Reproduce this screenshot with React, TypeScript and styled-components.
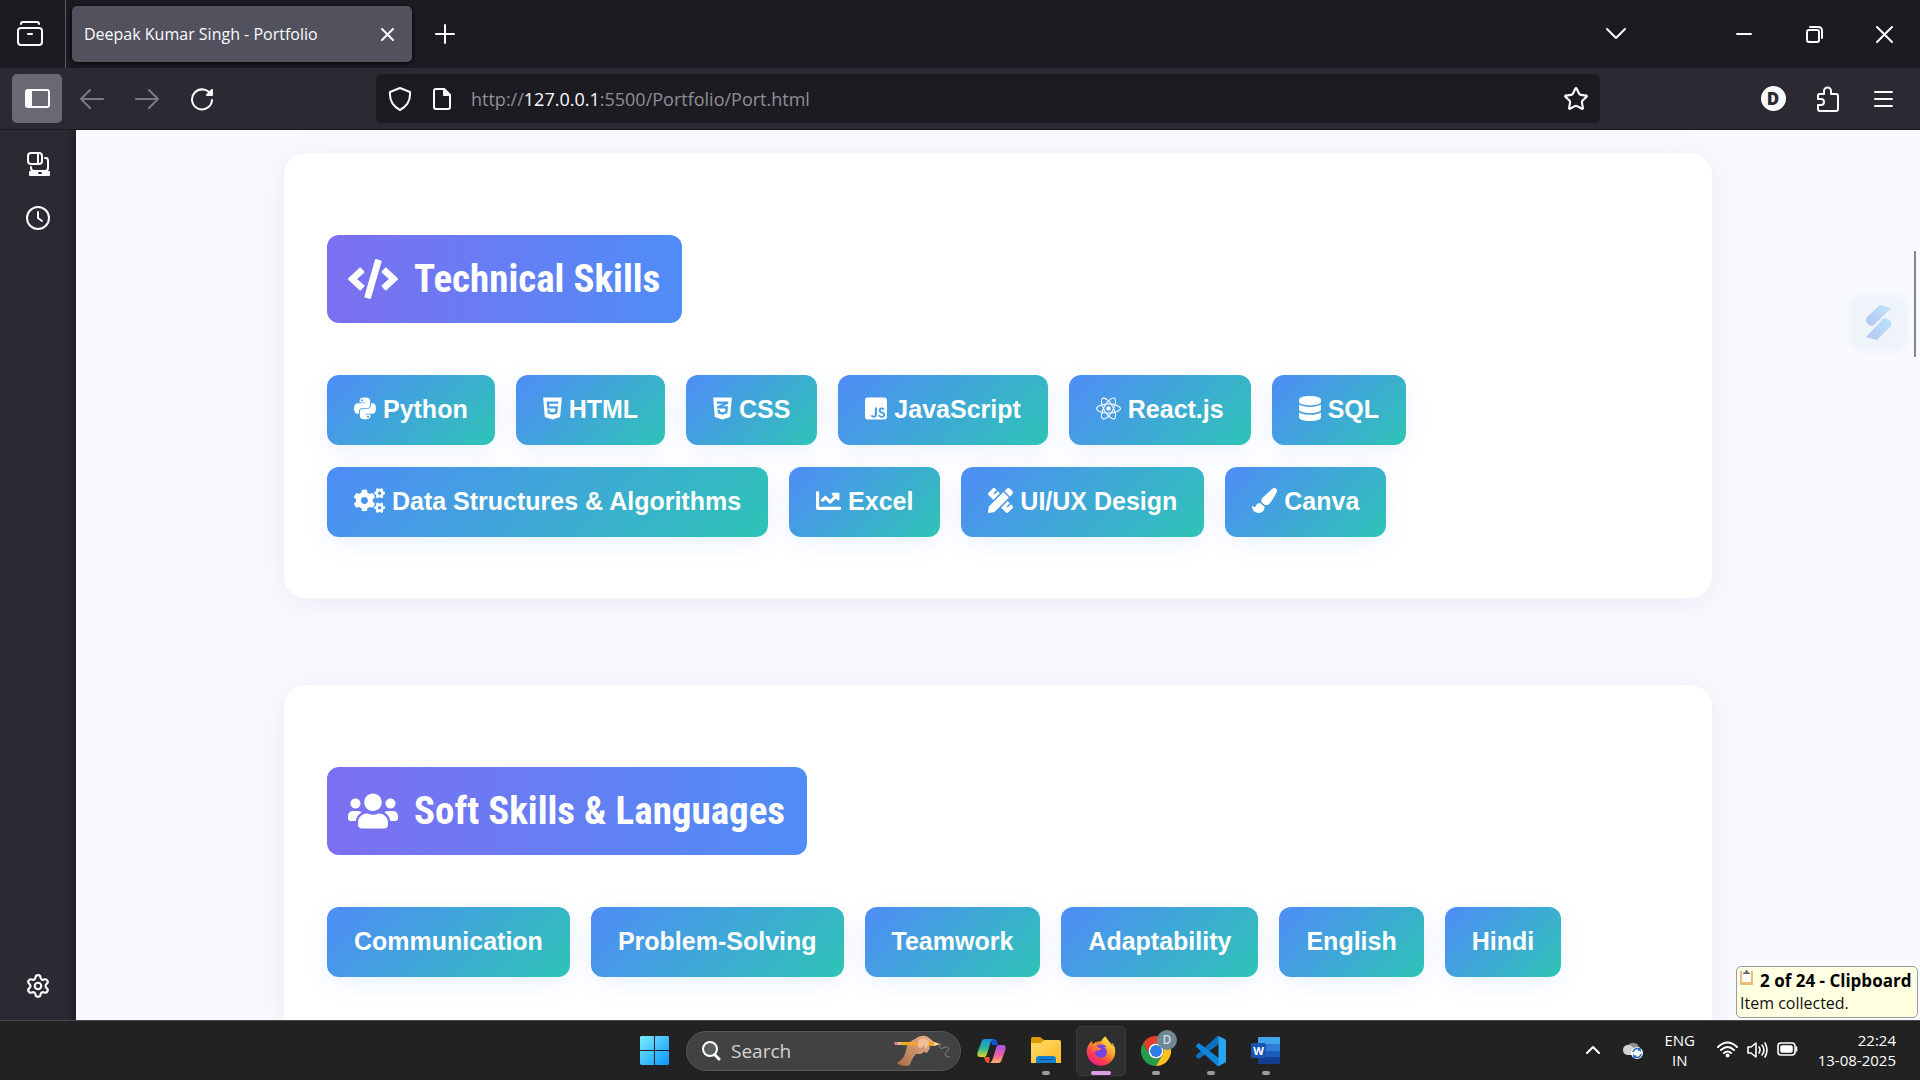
import React from "react";
import styled, { createGlobalStyle } from "styled-components";
import {
  FaChartLine,
  FaCode,
  FaCogs,
  FaCss3Alt,
  FaDatabase,
  FaHtml5,
  FaJsSquare,
  FaPaintBrush,
  FaPencilRuler,
  FaPython,
  FaReact,
  FaUsers,
} from "react-icons/fa";
import { FaFirefoxBrowser } from "react-icons/fa6";
import { Settings, Star } from "lucide-react";

const UI_FONT = '"Open Sans", "Noto Sans", sans-serif';

const GlobalStyle = createGlobalStyle`
  *, *::before, *::after { box-sizing: border-box; }
  body { margin: 0; background: #1c1b22; font-family: ${UI_FONT}; }
  button { font: inherit; color: inherit; background: none; border: 0; padding: 0; cursor: pointer; }
  svg { display: block; flex: none; }
`;

const Shell = styled.div`
  display: flex;
  flex-direction: column;
  height: 100vh;
  overflow: hidden;
`;

/* ---------- tab strip ---------- */

const TabStrip = styled.header`
  display: flex;
  align-items: stretch;
  height: 68px;
  flex: none;
  background: #1c1b22;
  color: #fbfbfe;
`;

const RecentButton = styled.button`
  display: grid;
  place-items: center;
  width: 66px;
  padding-right: 5px;
  border-right: 1px solid #5b5a63;
`;

const Tab = styled.div`
  display: flex;
  align-items: center;
  justify-content: space-between;
  width: 340px;
  margin: 6px;
  padding: 0 12px;
  border-radius: 5px;
  background: #52525e;
  box-shadow: 0 1px 5px #000000;
  font-size: 16px;
  white-space: nowrap;
`;

const TabClose = styled.button`
  display: grid;
  place-items: center;
  width: 26px;
  height: 30px;
`;

const NewTab = styled.button`
  display: grid;
  place-items: center;
  width: 54px;
`;

const WindowControls = styled.div`
  display: flex;
  margin-left: auto;
  padding-right: 1px;
`;

const WindowButton = styled.button<{ $gap?: number }>`
  display: grid;
  place-items: center;
  width: 70px;
  margin-right: ${(p) => p.$gap ?? 0}px;
`;

/* ---------- navigation toolbar ---------- */

const Toolbar = styled.nav`
  display: grid;
  grid-template-columns: 376px minmax(0, 1fr) 320px;
  align-items: center;
  height: 62px;
  flex: none;
  background: #2b2a33;
  border-bottom: 1px solid #1a191f;
  color: #fbfbfe;
`;

const ToolGroup = styled.div<{ $end?: boolean }>`
  display: flex;
  align-items: center;
  gap: 5px;
  padding: 0 12px;
  justify-content: ${(p) => (p.$end ? "flex-end" : "flex-start")};
`;

const ToolButton = styled.button<{ $active?: boolean; $dim?: boolean }>`
  display: grid;
  place-items: center;
  width: 50px;
  height: 49px;
  border-radius: 5px;
  background: ${(p) => (p.$active ? "#6a6973" : "transparent")};
  color: ${(p) => (p.$dim ? "#7b7a83" : "#fbfbfe")};
`;

const AddressBar = styled.div`
  display: flex;
  align-items: center;
  height: 49px;
  padding: 0 11px;
  border-radius: 5px;
  background: #1c1b22;
`;

const AddressIcon = styled.button`
  display: grid;
  place-items: center;
  width: 26px;
  margin-right: 16px;
  &:last-child { margin: 0 0 0 auto; }
`;

const Address = styled.a`
  color: #8f8e96;
  font-size: 18px;
  text-decoration: none;
  white-space: nowrap;
  b { font-weight: 400; color: #fbfbfe; }
`;

const Account = styled.span`
  display: grid;
  place-items: center;
  width: 25px;
  height: 25px;
  border-radius: 50%;
  background: #fbfbfe;
  color: #2b2a33;
  font-size: 17px;
  font-weight: 800;
`;

/* ---------- body ---------- */

const Body = styled.div`
  display: flex;
  flex: 1;
  min-height: 0;
`;

const SideBar = styled.aside`
  display: flex;
  flex-direction: column;
  align-items: center;
  gap: 4px;
  width: 76px;
  padding: 9px 0;
  flex: none;
  background: linear-gradient(90deg, #2b2a33 88%, #222129 100%);
  color: #fbfbfe;
`;

const SideButton = styled.button<{ $bottom?: boolean }>`
  display: grid;
  place-items: center;
  width: 50px;
  height: 50px;
  margin-top: ${(p) => (p.$bottom ? "auto" : 0)};
`;

const Viewport = styled.div`
  position: relative;
  flex: 1;
  min-width: 0;
  overflow: hidden;
  background: #f9faff;
`;

const Page = styled.main`
  display: flex;
  flex-direction: column;
  align-items: center;
  gap: 87px;
  padding: 23px 40px;
`;

const Card = styled.section`
  width: 100%;
  max-width: 1428px;
  padding: 82px 43px 61px;
  border-radius: 22px;
  background: #ffffff;
  box-shadow: 0 5px 32px rgba(60, 60, 110, 0.08);
`;

const SectionTitle = styled.h2`
  display: inline-flex;
  align-items: center;
  gap: 16px;
  height: 88px;
  margin: 0 0 52px;
  padding: 0 22px 0 21px;
  border-radius: 12px;
  background: linear-gradient(90deg, #7c6ff0, #4f8df7);
  color: #ffffff;
  font: 700 39px "Roboto Condensed", "Liberation Sans Narrow", Roboto, sans-serif;
  white-space: nowrap;
  svg { width: 50px; height: 40px; }
`;

const Skills = styled.ul`
  display: flex;
  flex-wrap: wrap;
  gap: 22px 21px;
  margin: 0;
  padding: 0;
  list-style: none;
`;

const Skill = styled.li<{ $icon?: number }>`
  padding: 0 27px 2px;
  border-radius: 12px;
  background: linear-gradient(135deg, #4f8cf7, #2ec4b6);
  box-shadow: 0 6px 22px rgba(79, 140, 247, 0.12);
  color: #ffffff;
  font: 700 25px/68px "Liberation Sans", Arial, sans-serif;
  white-space: nowrap;
  svg {
    display: inline-block;
    width: ${(p) => p.$icon ?? 25}px;
    height: 25px;
    vertical-align: -3px;
  }
`;

const ScrollThumb = styled.div`
  position: absolute;
  top: 121px;
  right: 4px;
  width: 2px;
  height: 106px;
  background: #87878b;
`;

const Assistant = styled.button`
  position: absolute;
  top: 162px;
  right: 10px;
  display: grid;
  place-items: center;
  width: 62px;
  height: 62px;
  border: 4px solid #f4f7fc;
  border-radius: 16px;
  background: #eff4fb;
`;

const Toast = styled.div`
  position: absolute;
  right: 2px;
  bottom: 2px;
  width: 182px;
  height: 52px;
  padding: 2px 3px;
  border: 1px solid #9c9ca2;
  border-radius: 5px;
  background: #ffffe1;
  color: #111111;
  font-size: 16px;
  line-height: 23px;
  white-space: nowrap;
`;

const ToastTitle = styled.strong`
  display: flex;
  gap: 7px;
  color: #000000;
  font-size: 17px;
`;

/* ---------- taskbar ---------- */

const Taskbar = styled.footer`
  display: grid;
  grid-template-columns: 1fr auto 1fr;
  height: 60px;
  flex: none;
  border-top: 1px solid #48494b;
  background: #222222;
  color: #ffffff;
`;

const Apps = styled.div`
  grid-column: 2;
  display: flex;
  align-items: center;
  gap: 5px;
`;

const AppButton = styled.button<{ $active?: boolean }>`
  position: relative;
  display: grid;
  place-items: center;
  width: 50px;
  height: 50px;
  border: 1px solid ${(p) => (p.$active ? "#3b3b3b" : "transparent")};
  border-radius: 5px;
  background: ${(p) => (p.$active ? "#2f2f2f" : "transparent")};
`;

const Running = styled.span<{ $active?: boolean }>`
  position: absolute;
  bottom: 0;
  left: 50%;
  width: ${(p) => (p.$active ? 20 : 8)}px;
  height: 4px;
  border-radius: 2px;
  background: ${(p) => (p.$active ? "#dc9fe3" : "#9b9b9b")};
  transform: translateX(-50%);
`;

const Profile = styled.span`
  position: absolute;
  top: 3px;
  right: 3px;
  width: 20px;
  height: 20px;
  border-radius: 50%;
  background: #6f8896;
  color: #d3dde2;
  font-size: 12px;
  font-weight: 600;
  line-height: 20px;
  text-align: center;
`;

const SearchBox = styled.label`
  display: flex;
  align-items: center;
  gap: 10px;
  width: 275px;
  height: 40px;
  margin-left: 2px;
  padding: 0 9px 0 14px;
  border: 1px solid #565656;
  border-radius: 20px;
  background: #424242;
`;

const SearchInput = styled.input`
  flex: 1;
  min-width: 0;
  padding: 0;
  border: 0;
  outline: 0;
  background: none;
  color: #d4d4d4;
  font: 19px ${UI_FONT};
  &::placeholder { color: #d4d4d4; opacity: 1; }
`;

const Tray = styled.div`
  display: flex;
  align-items: center;
  justify-content: flex-end;
  padding: 0 24px 2px 0;
  font-size: 15px;
  line-height: 20px;
`;

const TrayButton = styled.button<{ $w: number }>`
  display: grid;
  place-items: center;
  width: ${(p) => p.$w}px;
  height: 50px;
`;

const Status = styled.button`
  display: flex;
  align-items: center;
  gap: 9px;
  margin: 0 20px 0 10px;
`;

const Clock = styled.time`
  text-align: right;
  white-space: nowrap;
`;

/* ---------- drawings ---------- */

const Line = ({
  w = 24,
  h = 24,
  sw = 2,
  children,
}: {
  w?: number;
  h?: number;
  sw?: number;
  children: React.ReactNode;
}) => (
  <svg
    width={w}
    height={h}
    viewBox={`0 0 ${w} ${h}`}
    fill="none"
    stroke="currentColor"
    strokeWidth={sw}
    strokeLinecap="round"
    strokeLinejoin="round"
    aria-hidden="true"
  >
    {children}
  </svg>
);

const StartLogo = () => (
  <svg width="29" height="29" viewBox="0 0 29 29" aria-hidden="true">
    <defs>
      <linearGradient id="win" gradientUnits="userSpaceOnUse" x1="0" y1="0" x2="29" y2="29">
        <stop offset="0" stopColor="#7cecff" />
        <stop offset="1" stopColor="#0a95fb" />
      </linearGradient>
    </defs>
    <path fill="url(#win)" d="M1 0h13v14H0V1zM15 0h13l1 1v13H15zM0 15h14v14H1l-1-1zM15 15h14v13l-1 1H15z" />
  </svg>
);

const WritingHand = () => (
  <svg width="58" height="32" viewBox="0 0 58 32" aria-hidden="true">
    <defs>
      <linearGradient id="skin" x1="0" y1="1" x2="1" y2="0">
        <stop offset="0" stopColor="#a86c48" />
        <stop offset="1" stopColor="#eeb48c" />
      </linearGradient>
    </defs>
    <path
      fill="url(#skin)"
      d="M4 28C9 25 12 21 13 15c1-6 4-9 9-11 5-4 11-4 14-1l5 4-1 2-4 1 1 3-3 5-3-1-3 2-5 0c-3 3-5 7-6 11-4 2-9 1-13-2z"
    />
    <path fill="#f4a62a" d="M5 7l36 0 6 2-6 2L5 10z" />
    <path fill="#e67d8b" d="M1 7h4v3H2z" />
    <path fill="#c8c8c8" d="M5 7h2v3H5z" />
    <path fill="#f6d3a0" d="M41 7l6 2-6 2z" />
    <path fill="#f0bd99" d="M25 6c3-3 7-3 10 0l1 3-3 5-2-4-3 3-3-1z" />
    <path
      fill="none"
      stroke="#8b8b8b"
      strokeLinecap="round"
      d="M48 9c-3 4-1 5 2 4 4-2 7-1 5 2-3 4-5 6 1 7"
    />
  </svg>
);

const CopilotLogo = () => (
  <svg width="29" height="26" viewBox="0 0 29 26" aria-hidden="true">
    <defs>
      <linearGradient id="cp1" x1="0" y1="0" x2="0" y2="1">
        <stop offset="0" stopColor="#1b8fe8" />
        <stop offset="0.55" stopColor="#2fb98e" />
        <stop offset="1" stopColor="#e5d920" />
      </linearGradient>
      <linearGradient id="cp2" x1="0" y1="0" x2="0" y2="1">
        <stop offset="0" stopColor="#a055ee" />
        <stop offset="0.55" stopColor="#ee5d9b" />
        <stop offset="1" stopColor="#ffb36a" />
      </linearGradient>
    </defs>
    <path fill="#1a51cf" d="M14 1h3c3 0 3 3 4 6h-6z" />
    <path fill="#ee5130" d="M7 19h6l-1 6c-3 0-4-2-5-6z" />
    <path fill="url(#cp1)" d="M8 1h9c-2 0-3 2-4 5l-3 10c-1 3-2 3-4 3H3c-3 0-3-3-2-6L4 5c1-3 2-4 4-4z" />
    <path fill="url(#cp2)" d="M21 25h-9c2 0 3-2 4-5l3-10c1-3 2-3 4-3h3c3 0 3 3 2 6l-3 8c-1 3-2 4-4 4z" />
  </svg>
);

const FolderLogo = () => (
  <svg width="30" height="27" viewBox="0 0 30 27" aria-hidden="true">
    <defs>
      <linearGradient id="folder" x1="0" y1="0" x2="1" y2="1">
        <stop offset="0" stopColor="#ffdb68" />
        <stop offset="1" stopColor="#fcbb2a" />
      </linearGradient>
    </defs>
    <path fill="#dc9a05" d="M0 2q0-2 2-2h7l4 3v5H0z" />
    <path fill="url(#folder)" d="M0 6h10l3-3h15q2 0 2 2v21H0z" />
    <path fill="#1181cf" d="M5 26v-4q0-3 3-3h14q3 0 3 3v4z" />
    <path fill="#0b5797" d="M8 22h14v1H8z" />
  </svg>
);

const FirefoxLogo = () => (
  <svg width="30" height="30" viewBox="0 0 30 30" aria-hidden="true">
    <defs>
      <linearGradient id="fox" x1="0.85" y1="0.05" x2="0.2" y2="1">
        <stop offset="0" stopColor="#fff14f" />
        <stop offset="0.4" stopColor="#ff9c28" />
        <stop offset="0.7" stopColor="#ff3f4c" />
        <stop offset="1" stopColor="#e8168a" />
      </linearGradient>
    </defs>
    <circle cx="15" cy="16" r="11" fill="#ff7a2d" />
    <circle cx="15" cy="15" r="7" fill="#7a42df" />
    <FaFirefoxBrowser size={30} fill="url(#fox)" />
  </svg>
);

const ChromeLogo = () => (
  <svg width="30" height="30" viewBox="0 0 48 48" aria-hidden="true">
    <path fill="#e43e2f" d="M24 12H44.8A24 24 0 0 0 3.2 12L13.6 30A12 12 0 0 1 24 12z" />
    <path fill="#259e49" d="M13.6 30L3.2 12A24 24 0 0 0 24 48L34.4 30A12 12 0 0 1 13.6 30z" />
    <path fill="#fcc31e" d="M34.4 30L24 48A24 24 0 0 0 44.8 12H24A12 12 0 0 1 34.4 30z" />
    <circle cx="24" cy="24" r="12" fill="#ffffff" />
    <circle cx="24" cy="24" r="9.5" fill="#2f7bea" />
  </svg>
);

const CodeLogo = () => (
  <svg width="30" height="30" viewBox="0 0 100 100" aria-hidden="true">
    <path
      fill="#0e72ba"
      d="M96.5 10.8L75.9.9c-2.4-1.2-5.2-.7-7.1 1.2L1.3 63.6c-1.8 1.6-1.8 4.5 0 6.1l5.5 5c1.5 1.4 3.7 1.5 5.3.3L93.4 13.4c2.7-2.1 6.6-.2 6.6 3.3v-.3c0-2.4-1.4-4.6-3.5-5.6z"
    />
    <path
      fill="#0b86d8"
      d="M96.5 89.2l-20.6 9.9c-2.4 1.2-5.2.7-7.1-1.2L1.3 36.4c-1.8-1.6-1.8-4.5 0-6.1l5.5-5c1.5-1.4 3.7-1.5 5.3-.3l81.3 61.6c2.7 2.1 6.6.2 6.6-3.3v.3c0 2.4-1.4 4.6-3.5 5.6z"
    />
    <path
      fill="#27a7f0"
      d="M75.9 99.1c-2.4 1.2-5.2.7-7.1-1.2 2.3 2.3 6.2.7 6.2-2.6V4.7c0-3.3-3.9-4.9-6.2-2.6C70.6.2 73.5-.3 75.9.9l20.6 9.9c2.1 1 3.5 3.2 3.5 5.6v67.2c0 2.4-1.4 4.6-3.5 5.6z"
    />
  </svg>
);

const WordLetter = styled.span`
  position: absolute;
  top: 16px;
  left: 9px;
  width: 15px;
  height: 15px;
  border-radius: 2px;
  background: #1b53b3;
  font-size: 11px;
  font-weight: 700;
  line-height: 15px;
  text-align: center;
`;

const WordLogo = () => (
  <>
    <svg width="30" height="27" viewBox="0 0 30 27" aria-hidden="true">
      <path fill="#42a4ec" d="M7 1q0-1 1-1h20q1 0 1 1v6H7z" />
      <path fill="#2c7ed5" d="M7 7h22v7H7z" />
      <path fill="#1d5cbd" d="M7 14h22v6H7z" />
      <path fill="#123f91" d="M7 20h22v6q0 1-1 1H8q-1 0-1-1z" />
    </svg>
    <WordLetter>W</WordLetter>
  </>
);

const ClipboardIcon = () => (
  <svg width="13" height="17" viewBox="0 0 13 17" aria-hidden="true">
    <path fill="#ecbd78" d="M0 2h13v14H0z" />
    <path fill="#ffffff" d="M2 2h9v11H2z" />
    <path fill="#696969" d="M3 4l2-1 1-2h1l1 2 2 1v1H3z" />
  </svg>
);

/* ---------- content ---------- */

const technical = [
  { name: "Python", icon: <FaPython />, width: 22 },
  { name: "HTML", icon: <FaHtml5 />, width: 19 },
  { name: "CSS", icon: <FaCss3Alt />, width: 19 },
  { name: "JavaScript", icon: <FaJsSquare />, width: 22 },
  { name: "React.js", icon: <FaReact />, width: 25 },
  { name: "SQL", icon: <FaDatabase />, width: 22 },
  { name: "Data Structures & Algorithms", icon: <FaCogs />, width: 31 },
  { name: "Excel", icon: <FaChartLine />, width: 25 },
  { name: "UI/UX Design", icon: <FaPencilRuler />, width: 25 },
  { name: "Canva", icon: <FaPaintBrush />, width: 25 },
];

const soft = ["Communication", "Problem-Solving", "Teamwork", "Adaptability", "English", "Hindi"];

const openApps = [
  { name: "File Explorer", logo: <FolderLogo /> },
  { name: "Firefox", logo: <FirefoxLogo />, active: true },
  { name: "Chrome", logo: <ChromeLogo />, profile: "D" },
  { name: "Visual Studio Code", logo: <CodeLogo /> },
  { name: "Word", logo: <WordLogo /> },
];

export default function App() {
  return (
    <Shell>
      <GlobalStyle />
      <TabStrip>
        <RecentButton aria-label="Recent browsing">
          <Line w={26} h={26} sw={2}>
            <path d="M4 3q0-2 2-2h14q2 0 2 2" />
            <rect x="1" y="7" width="24" height="17" rx="3" />
            <path d="M11 13h4" />
          </Line>
        </RecentButton>
        <Tab>
          Deepak Kumar Singh - Portfolio
          <TabClose aria-label="Close tab">
            <Line w={13} h={13} sw={2}>
              <path d="M1 1l11 11M12 1L1 12" />
            </Line>
          </TabClose>
        </Tab>
        <NewTab aria-label="New tab">
          <Line w={20} h={20} sw={2}>
            <path d="M10 1v18M1 10h18" />
          </Line>
        </NewTab>
        <WindowControls>
          <WindowButton $gap={58} aria-label="List all tabs">
            <Line w={20} h={12} sw={2}>
              <path d="M1 1l9 9 9-9" />
            </Line>
          </WindowButton>
          <WindowButton aria-label="Minimize">
            <Line w={16} h={4} sw={2}>
              <path d="M1 2h14" />
            </Line>
          </WindowButton>
          <WindowButton aria-label="Restore">
            <Line w={17} h={17} sw={2}>
              <rect x="1" y="4" width="12" height="12" rx="2" />
              <path d="M4 1h8q4 0 4 4v7" />
            </Line>
          </WindowButton>
          <WindowButton aria-label="Close">
            <Line w={17} h={17} sw={2}>
              <path d="M1 1l15 15M16 1L1 16" />
            </Line>
          </WindowButton>
        </WindowControls>
      </TabStrip>

      <Toolbar aria-label="Navigation">
        <ToolGroup>
          <ToolButton $active aria-label="Sidebar">
            <Line w={25} h={20} sw={2}>
              <rect x="1" y="1" width="23" height="17" rx="2" />
              <path fill="currentColor" d="M2 2h4v15H2z" />
            </Line>
          </ToolButton>
          <ToolButton $dim aria-label="Back">
            <Line w={24} h={20} sw={2}>
              <path d="M23 10H1M10 1l-9 9 9 9" />
            </Line>
          </ToolButton>
          <ToolButton $dim aria-label="Forward">
            <Line w={24} h={20} sw={2}>
              <path d="M1 10h22M14 1l9 9-9 9" />
            </Line>
          </ToolButton>
          <ToolButton aria-label="Reload">
            <Line w={24} h={24} sw={2}>
              <path d="M21 8A10 10 0 1 0 22 13" />
              <path fill="currentColor" d="M22 3v5h-5z" />
            </Line>
          </ToolButton>
        </ToolGroup>
        <AddressBar>
          <AddressIcon aria-label="Tracking protection">
            <Line w={24} h={26} sw={2}>
              <path d="M12 2l10 4q1 12-10 18Q1 18 2 6z" />
            </Line>
          </AddressIcon>
          <AddressIcon aria-label="Site information">
            <Line w={20} h={24} sw={2}>
              <path d="M12 2H4Q2 2 2 4v16q0 2 2 2h12q2 0 2-2V8z" />
              <path fill="currentColor" d="M12 2v6h6z" />
            </Line>
          </AddressIcon>
          <Address href="#page">
            http://<b>127.0.0.1</b>:5500/Portfolio/Port.html
          </Address>
          <AddressIcon aria-label="Bookmark this page">
            <Star size={26} strokeWidth={2} />
          </AddressIcon>
        </AddressBar>
        <ToolGroup $end>
          <ToolButton aria-label="Account">
            <Account>D</Account>
          </ToolButton>
          <ToolButton aria-label="Extensions">
            <Line w={24} h={26} sw={2}>
              <path d="M3 8h5V5a3 3 0 0 1 7 0v3h5q2 0 2 2v13q0 2-2 2H4q-2 0-2-2v-4h3a3 3 0 0 0 0-6H2v-4z" />
            </Line>
          </ToolButton>
          <ToolButton aria-label="Menu">
            <Line w={19} h={16} sw={2}>
              <path d="M1 1h17M1 8h17M1 15h17" />
            </Line>
          </ToolButton>
        </ToolGroup>
      </Toolbar>

      <Body>
        <SideBar>
          <SideButton aria-label="Synced tabs">
            <Line w={24} h={25} sw={2}>
              <rect x="2" y="1" width="14" height="11" rx="3" />
              <path d="M12 2v9M19 6h1q2 0 2 3v7q0 3-3 3H8q-3 0-3-3v-1" />
              <path fill="currentColor" d="M4 20h19v3H4z" />
              <path stroke="#2b2a33" d="M13 21h2" />
            </Line>
          </SideButton>
          <SideButton aria-label="History">
            <Line w={24} h={24} sw={2}>
              <circle cx="12" cy="12" r="11" />
              <path d="M12 6v6l4 3" />
            </Line>
          </SideButton>
          <SideButton $bottom aria-label="Customize sidebar">
            <Settings size={26} strokeWidth={2} />
          </SideButton>
        </SideBar>

        <Viewport>
          <Page id="page">
            <Card>
              <SectionTitle>
                <FaCode /> Technical Skills
              </SectionTitle>
              <Skills>
                {technical.map((s) => (
                  <Skill key={s.name} $icon={s.width}>
                    {s.icon} {s.name}
                  </Skill>
                ))}
              </Skills>
            </Card>
            <Card>
              <SectionTitle>
                <FaUsers /> Soft Skills &amp; Languages
              </SectionTitle>
              <Skills>
                {soft.map((s) => (
                  <Skill key={s}>{s}</Skill>
                ))}
              </Skills>
            </Card>
          </Page>
          <ScrollThumb />
          <Assistant aria-label="Assistant">
            <svg width="28" height="36" viewBox="0 0 28 36" aria-hidden="true">
              <defs>
                <linearGradient id="bolt" x1="1" y1="0" x2="0" y2="1">
                  <stop offset="0" stopColor="#bce4fc" />
                  <stop offset="1" stopColor="#b4c4f0" />
                </linearGradient>
              </defs>
              <path fill="url(#bolt)" d="M15 0l11 3L8 21q-4 0-6-3t0-6z" />
              <path fill="url(#bolt)" d="M19 13q4 0 7 3 1 4-1 6L12 35 1 32z" />
            </svg>
          </Assistant>
          <Toast role="status">
            <ToastTitle>
              <ClipboardIcon />2 of 24 - Clipboard
            </ToastTitle>
            Item collected.
          </Toast>
        </Viewport>
      </Body>

      <Taskbar>
        <Apps>
          <AppButton aria-label="Start">
            <StartLogo />
          </AppButton>
          <SearchBox>
            <Line w={20} h={20} sw={2}>
              <circle cx="9" cy="8" r="7" fill="#5b5e60" />
              <path d="M14 14l4 4" strokeWidth="3" />
            </Line>
            <SearchInput type="search" aria-label="Search" placeholder="Search" />
            <WritingHand />
          </SearchBox>
          <AppButton aria-label="Copilot">
            <CopilotLogo />
          </AppButton>
          {openApps.map((app) => (
            <AppButton key={app.name} $active={app.active} aria-label={app.name}>
              {app.logo}
              {app.profile && <Profile>{app.profile}</Profile>}
              <Running $active={app.active} />
            </AppButton>
          ))}
        </Apps>
        <Tray>
          <TrayButton $w={40} aria-label="Show hidden icons">
            <Line w={14} h={10} sw={2}>
              <path d="M1 8l6-6 6 6" />
            </Line>
          </TrayButton>
          <TrayButton $w={40} aria-label="OneDrive">
            <svg width="22" height="20" viewBox="0 0 22 20" aria-hidden="true">
              <path fill="#8d8d8d" d="M6 6a6 6 0 0 1 11 1q3 2 2 5H6z" />
              <path fill="#d2d2d2" d="M5 5q4-1 7 4l-2 6H5Q1 14 1 10t4-5z" />
              <circle cx="15" cy="13" r="6" fill="#ffffff" />
              <path
                fill="none"
                stroke="#1b6fc2"
                strokeWidth="1.6"
                d="M11 12a4 4 0 0 1 7-2V8M18 10h-2M19 14a4 4 0 0 1-7 2v2M12 16h2"
              />
            </svg>
          </TrayButton>
          <TrayButton $w={54} aria-label="Input language">
            <span>
              ENG
              <br />
              IN
            </span>
          </TrayButton>
          <Status aria-label="Network, volume and battery">
            <Line w={21} h={17} sw={2}>
              <path d="M1 6q9.500-9 19 0M4 9q6.500-6 13 0M7 12q3.500-3 7 0" />
              <circle cx="10.500" cy="14.500" r="1" fill="currentColor" />
            </Line>
            <Line w={21} h={18} sw={1.6}>
              <path d="M1 6h3l5-4v14l-5-4H1zM12 6q2 3 0 6M15 4q4 5 0 10M18 2q4 7 0 14" />
            </Line>
            <Line w={21} h={15} sw={1.6}>
              <rect x="1" y="1" width="17" height="12" rx="3" />
              <rect x="4" y="4" width="11" height="6" rx="1" fill="currentColor" />
              <path d="M19.500 5v4" />
            </Line>
          </Status>
          <Clock dateTime="2025-08-13T22:24">
            22:24
            <br />
            13-08-2025
          </Clock>
        </Tray>
      </Taskbar>
    </Shell>
  );
}
